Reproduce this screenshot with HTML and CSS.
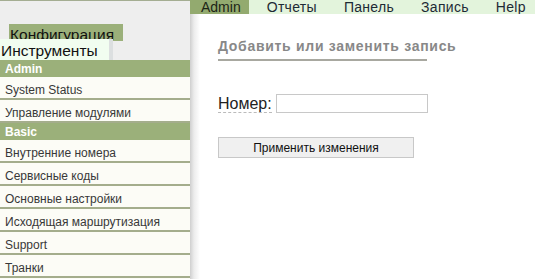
FILE: index.html
```html
<!DOCTYPE html>
<html lang="ru">

<head>
    <meta charset="UTF-8">
    <title>Конфигурация</title>
    <link rel="stylesheet" href="styles.css">
</head>

<body>
    <div class="page">
        <div class="sidebar">
            <div class="sidebar-top">
                <div class="section-tab active-section">Конфигурация</div>
                <div class="section-tab tools-section">Инструменты</div>
            </div>
            <ul class="menu">
                <li class="menu-header">Admin</li>
                <li class="menu-item">System Status</li>
                <li class="menu-item">Управление модулями</li>
                <li class="menu-header">Basic</li>
                <li class="menu-item">Внутренние номера</li>
                <li class="menu-item">Сервисные коды</li>
                <li class="menu-item">Основные настройки</li>
                <li class="menu-item">Исходящая маршрутизация</li>
                <li class="menu-item">Support</li>
                <li class="menu-item">Транки</li>
            </ul>
        </div>

        <div class="main">
            <div class="topnav">
                <span class="nav-item current">Admin</span>
                <span class="nav-item">Отчеты</span>
                <span class="nav-item">Панель</span>
                <span class="nav-item">Запись</span>
                <span class="nav-item">Help</span>
            </div>
            <div class="content">
                <form class="record-form">
                    <h2 class="form-title">Добавить или заменить запись</h2>
                    <div class="form-row">
                        <label for="number"><abbr title="Номер">Номер:</abbr></label>
                        <input type="text" id="number" name="number">
                    </div>
                    <button type="button" class="apply-button">Применить изменения</button>
                </form>
            </div>
        </div>
    </div>
</body>

</html>
```

FILE: styles.css
```css
body {
    margin: 0;
    font-family: "Liberation Sans", Arial, sans-serif;
    background-color: #fff;
    color: #222;
}

.page {
    display: flex;
    height: 279px;
    overflow: hidden;
}

/* left column */

.sidebar {
    width: 190px;
    flex-shrink: 0;
    border-top: 1px solid #a4ad92;
    background-color: #fcfcf6;
}

.sidebar-top {
    height: 59px;
    background-color: #eeeeee;
    position: relative;
}

.section-tab {
    color: #111;
    white-space: nowrap;
}

.active-section {
    position: absolute;
    left: 9px;
    top: 23px;
    width: 113px;
    height: 17px;
    padding-left: 1px;
    background-color: #9bb07a;
    font-size: 15.5px;
    line-height: 21px;
}

.tools-section {
    position: absolute;
    left: 0;
    top: 38px;
    width: 108px;
    height: 21px;
    padding-left: 1px;
    font-size: 15.5px;
    line-height: 24px;
    background-color: #f1fdf0;
    border-right: 4px solid #dcdfe0;
}

.menu {
    list-style: none;
    margin: 0;
    padding: 0;
}

.menu-header {
    height: 16px;
    padding: 1px 0 0 5px;
    line-height: 17px;
    background-color: #9bb07a;
    color: #fff;
    font-size: 12px;
    font-weight: bold;
}

.menu-item {
    height: 19px;
    padding: 2px 0 0 5px;
    line-height: 23px;
    font-size: 12px;
    color: #383838;
    border-bottom: 2px solid #a4ad8c;
}

/* right column */

.main {
    flex: 1;
    display: flex;
    flex-direction: column;
}

.topnav {
    display: flex;
    gap: 7px;
    align-self: flex-start;
    height: 14px;
    background-color: #e3f4dc;
}

.nav-item {
    padding: 0 9px 0 11px;
    font-size: 14px;
    line-height: 14px;
    letter-spacing: 0.3px;
    color: #1d2a35;
}

.current {
    padding-right: 8px;
    background-color: #93aa6f;
    letter-spacing: 0;
    color: #1c2416;
}

.content {
    flex: 1;
    padding: 24px 0 0 28px;
    background: linear-gradient(to right, #cfcfcf 0, #ececec 4px, #fff 10px);
}

.record-form {
    width: 209px;
}

.form-title {
    margin: 0;
    padding-bottom: 5px;
    border-bottom: 2px solid #a8a8a0;
    font-size: 14px;
    line-height: 16px;
    letter-spacing: 0.7px;
    white-space: nowrap;
    color: #888;
}

.form-row {
    display: flex;
    align-items: center;
    margin-top: 33px;
}

label {
    font-size: 16px;
    color: #222;
    margin-right: 4px;
}

abbr {
    text-decoration: none;
    border-bottom: 1px dashed #bbb;
}

input {
    width: 152px;
    height: 19px;
    padding: 0 3px;
    box-sizing: border-box;
    border: 1px solid #c8c8c8;
}

.apply-button {
    display: block;
    width: 196px;
    height: 21px;
    margin-top: 24px;
    padding: 0;
    border: 1px solid #c8c8c8;
    background-color: #f0f0f0;
    font-family: "Liberation Sans", Arial, sans-serif;
    font-size: 12px;
    color: #111;
}
```
